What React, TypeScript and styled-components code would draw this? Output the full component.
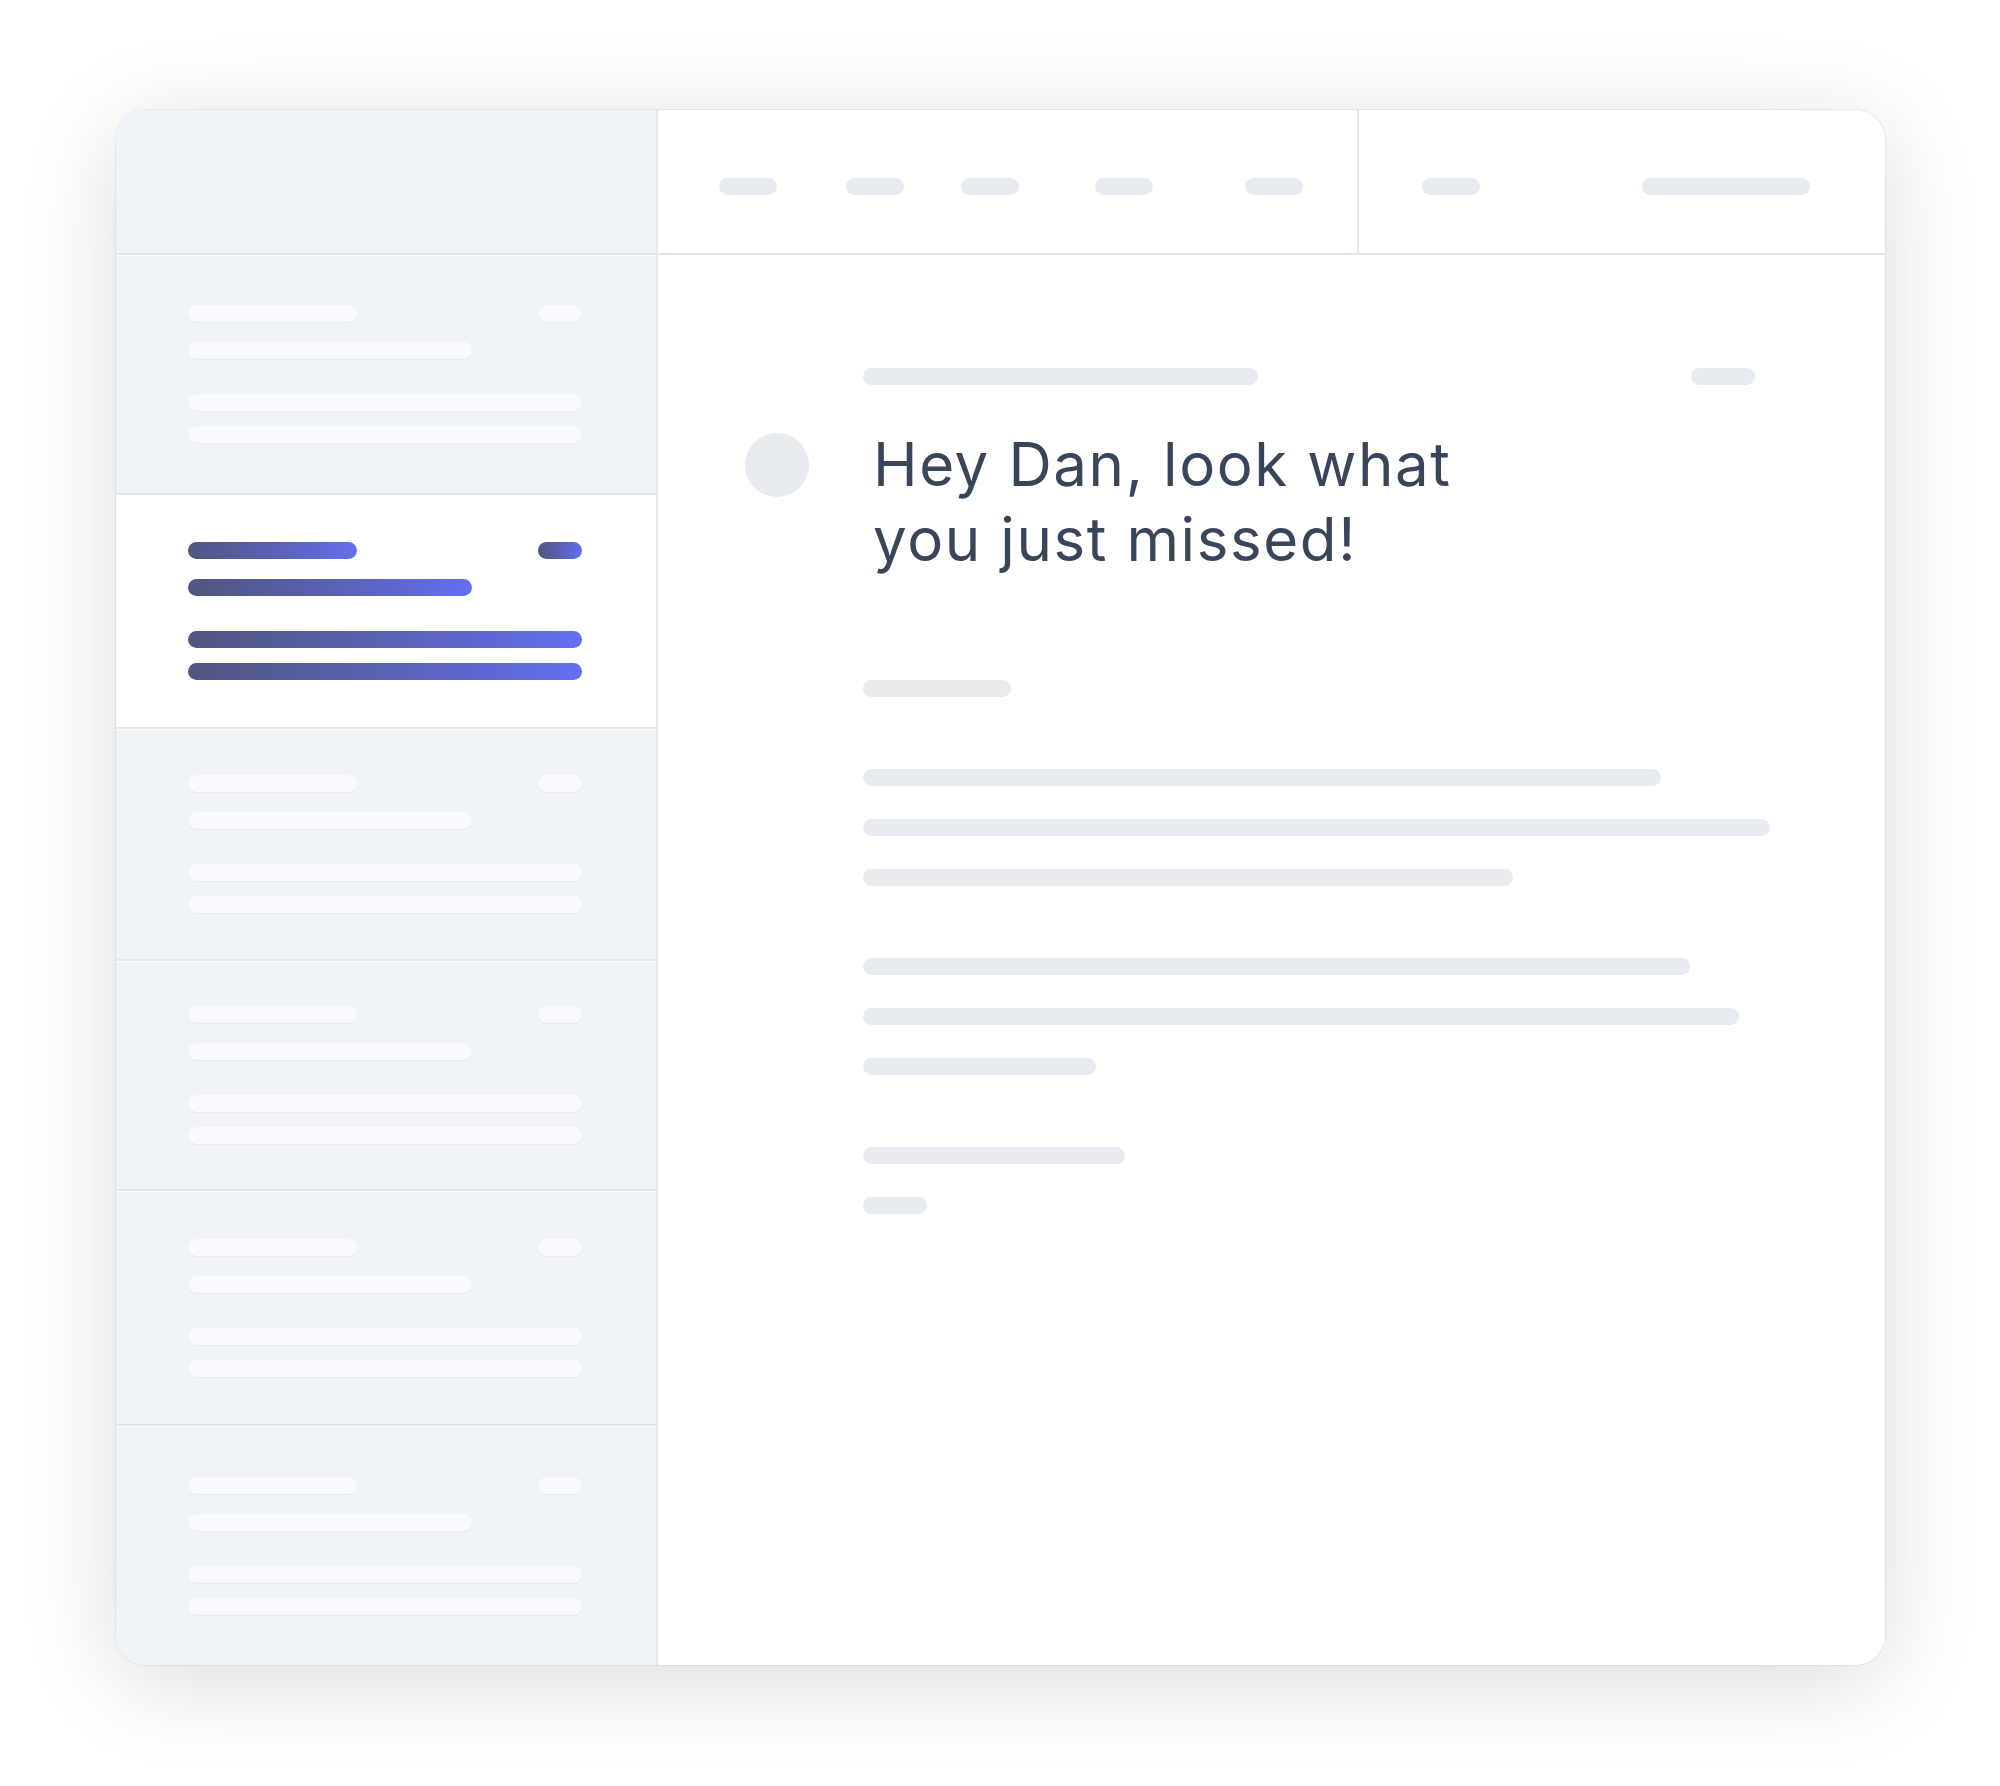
import React from 'react';
import styled, { createGlobalStyle, css } from 'styled-components';

const GlobalStyle = createGlobalStyle`
  html, body {
    margin: 0;
    padding: 0;
    background: #ffffff;
  }
  * {
    box-sizing: border-box;
  }
`;

type Tone = 'line' | 'ghost' | 'active';

const Page = styled.div`
  width: 2000px;
  height: 1786px;
  padding: 110px 0 0 116px;
  background: #ffffff;
  font-family: Inter, 'Liberation Sans', sans-serif;
`;

const Window = styled.div`
  width: 1769px;
  height: 1555px;
  display: flex;
  background: #ffffff;
  border-radius: 30px;
  overflow: hidden;
  box-shadow: 0 16px 100px rgba(0, 0, 0, 0.14), 0 0 0 1px rgba(225, 230, 238, 0.5);
`;

const Sidebar = styled.aside`
  width: 542px;
  flex-shrink: 0;
  display: flex;
  flex-direction: column;
  background: #f0f3f8;
  border-right: 2px solid #e4e8ee;
`;

const SidebarHeader = styled.div`
  height: 145px;
  flex-shrink: 0;
  border-bottom: 2px solid #e4e8ee;
`;

const ThreadList = styled.div`
  flex: 1;
  display: flex;
  flex-direction: column;
`;

const Thread = styled.div<{ $selected?: boolean; $h?: number }>`
  flex: ${({ $h }) => ($h ? `0 0 ${$h}px` : '1')};
  display: flex;
  flex-direction: column;
  justify-content: center;
  padding: 0 74px 0 72px;
  background: ${({ $selected }) => ($selected ? '#ffffff' : '#f0f3f8')};
  box-shadow: inset 0 1px 0 rgba(255, 255, 255, 0.8);
  border-bottom: 2px solid #e4e8ee;

  &:last-child {
    border-bottom: none;
  }
`;

const ThreadTop = styled.div`
  display: flex;
  justify-content: space-between;
  align-items: center;
`;

const Bar = styled.div<{ $w: number; $tone?: Tone; $mt?: number }>`
  width: ${({ $w }) => $w}px;
  height: 17px;
  flex-shrink: 0;
  border-radius: 9px;
  margin-top: ${({ $mt }) => $mt ?? 0}px;
  ${({ $tone }) =>
    $tone === 'active'
      ? css`
          background: linear-gradient(90deg, #50567f 0%, #5a62b8 55%, #6370f2 100%);
        `
      : $tone === 'ghost'
      ? css`
          background: #f9fafd;
          box-shadow: 0 1px 1px rgba(40, 60, 90, 0.05);
        `
      : css`
          background: #e8ebf0;
        `}
`;

const Main = styled.main`
  flex: 1;
  min-width: 0;
  display: flex;
  flex-direction: column;
`;

const Toolbar = styled.div`
  height: 145px;
  flex-shrink: 0;
  display: flex;
  border-bottom: 2px solid #e4e8ee;
`;

const ToolGroup = styled.div`
  width: 701px;
  flex-shrink: 0;
  display: flex;
  align-items: center;
  padding: 9px 0 0 61px;
  border-right: 2px solid #e4e8ee;
`;

const ToolPill = styled(Bar)<{ $gap: number }>`
  margin-left: ${({ $gap }) => $gap}px;
`;

const SearchGroup = styled.div`
  flex: 1;
  min-width: 0;
  display: flex;
  align-items: center;
  justify-content: space-between;
  padding: 9px 75px 0 63px;
`;

const Message = styled.section`
  flex: 1;
  min-width: 0;
  display: flex;
  flex-direction: column;
  padding: 113px 130px 0 87px;
`;

const MetaRow = styled.div`
  display: flex;
  justify-content: space-between;
  align-items: center;
  margin-left: 118px;
`;

const TitleRow = styled.div`
  display: flex;
  gap: 64px;
  margin-top: 42px;
`;

const Avatar = styled.div`
  width: 64px;
  height: 64px;
  flex-shrink: 0;
  margin-top: 6px;
  border-radius: 50%;
  background: #e8ebf0;
`;

const Title = styled.h1`
  margin: 0;
  font-family: Inter, 'Liberation Sans', sans-serif;
  font-size: 60px;
  line-height: 75px;
  font-weight: 400;
  color: #394659;
  letter-spacing: 1.6px;
`;

const Paragraphs = styled.div`
  display: flex;
  flex-direction: column;
  gap: 72px;
  margin: 103px 0 0 118px;
`;

const Paragraph = styled.div`
  display: flex;
  flex-direction: column;
  gap: 33px;
`;

const threads = [
  { selected: false, h: 240 },
  { selected: true, h: 234 },
  { selected: false, h: 232 },
  { selected: false, h: 230 },
  { selected: false, h: 235 },
  { selected: false },
];
const toolbarPills = [0, 69, 57, 76, 92];
const paragraphs = [[148], [798, 907, 650], [827, 876, 233], [262, 64]];

export default function App() {
  return (
    <Page>
      <GlobalStyle />
      <Window>
        <Sidebar>
          <SidebarHeader />
          <ThreadList>
            {threads.map(({ selected, h }, i) => {
              const tone: Tone = selected ? 'active' : 'ghost';
              return (
                <Thread key={i} $selected={selected} $h={h}>
                  <ThreadTop>
                    <Bar $w={169} $tone={tone} />
                    <Bar $w={44} $tone={tone} />
                  </ThreadTop>
                  <Bar $w={284} $tone={tone} $mt={20} />
                  <Bar $w={394} $tone={tone} $mt={35} />
                  <Bar $w={394} $tone={tone} $mt={15} />
                </Thread>
              );
            })}
          </ThreadList>
        </Sidebar>
        <Main>
          <Toolbar>
            <ToolGroup>
              {toolbarPills.map((gap, i) => (
                <ToolPill key={i} $w={58} $gap={gap} />
              ))}
            </ToolGroup>
            <SearchGroup>
              <Bar $w={58} />
              <Bar $w={168} />
            </SearchGroup>
          </Toolbar>
          <Message>
            <MetaRow>
              <Bar $w={395} />
              <Bar $w={64} />
            </MetaRow>
            <TitleRow>
              <Avatar />
              <Title>
                Hey Dan, look what
                <br />
                you just missed!
              </Title>
            </TitleRow>
            <Paragraphs>
              {paragraphs.map((widths, i) => (
                <Paragraph key={i}>
                  {widths.map((w, j) => (
                    <Bar key={j} $w={w} />
                  ))}
                </Paragraph>
              ))}
            </Paragraphs>
          </Message>
        </Main>
      </Window>
    </Page>
  );
}
